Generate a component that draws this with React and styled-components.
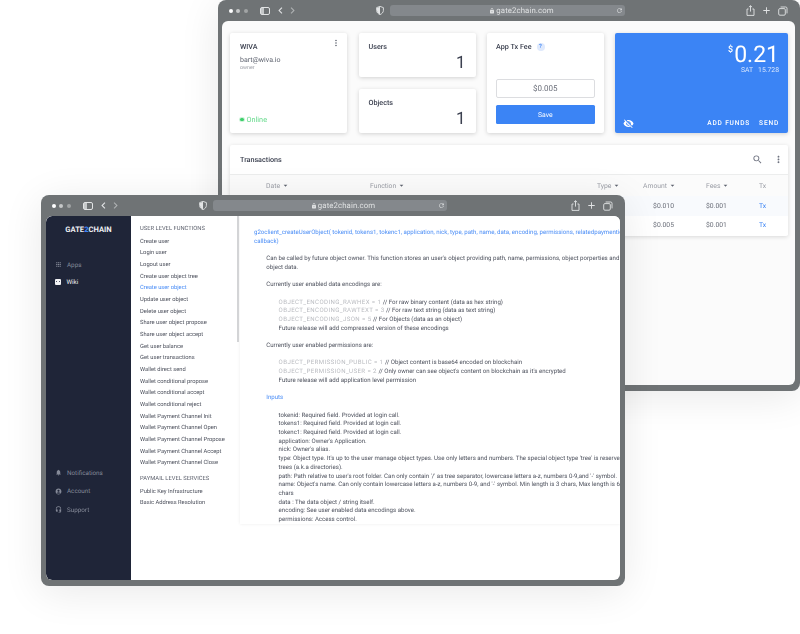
import React from "react";
import styled, { createGlobalStyle } from "styled-components";
import {
  MdApps,
  MdNotifications,
  MdAccountCircle,
  MdHeadsetMic,
  MdVisibilityOff,
  MdSearch,
  MdMoreVert,
  MdArrowDropDown,
  MdLock,
  MdRefresh,
  MdChevronLeft,
  MdChevronRight,
  MdAdd,
} from "react-icons/md";

const GlobalStyle = createGlobalStyle`
  html, body {
    margin: 0;
    padding: 0;
    background: #fff;
    overflow: hidden;
  }
  * { box-sizing: border-box; }
`;

const Stage = styled.div`
  position: relative;
  width: 800px;
  height: 634px;
  overflow: hidden;
  font-family: Roboto, "Liberation Sans", sans-serif;
  text-rendering: geometricPrecision;
  color: #3c4150;
  filter: blur(0.3px);
`;

// browser windows sit on a free canvas, so they are the only things placed by coordinates
const Win = styled.div`
  position: absolute;
  left: ${(p) => p.$x}px;
  top: ${(p) => p.$y}px;
  width: ${(p) => p.$w}px;
  height: 391px;
  display: flex;
  flex-direction: column;
  padding: 0 ${(p) => p.$right}px 6px ${(p) => p.$left}px;
  background: #6f7375;
  border-radius: 8px;
  box-shadow: 0 6px 40px rgba(0, 0, 0, 0.09);
`;

const Toolbar = styled.div`
  display: flex;
  align-items: center;
  flex: 0 0 21px;
  margin-left: ${(p) => 7 - p.$left}px;
  color: #e2e4e5;
`;

const Dots = styled.div`
  display: flex;
  gap: 3.4px;
  width: 31px;
  margin-left: 4px;
`;

const Dot = styled.span`
  width: 4px;
  height: 4px;
  border-radius: 50%;
  background: #fff;
  opacity: ${(p) => p.$o};
`;

const SidebarToggle = styled.span`
  display: flex;
  width: 9.5px;
  height: 8px;
  margin-right: 4px;
  border: 1px solid #e2e4e5;
  border-radius: 2px;
  &::before {
    content: "";
    width: 3px;
    background: #e2e4e5;
    opacity: 0.75;
  }
`;

const NavPair = styled.div`
  display: flex;
  align-items: center;
  width: 110px;
  font-size: 13px;
  svg:nth-child(2) {
    margin-left: -1px;
  }
`;

const Url = styled.div`
  position: relative;
  display: flex;
  align-items: center;
  justify-content: center;
  flex: 0 0 ${(p) => p.$w}px;
  height: 11px;
  margin-left: 6px;
  padding-left: ${(p) => p.$shift}px;
  gap: 1px;
  background: #84888c;
  border-radius: 3px;
  color: #dfe1e2;
  font-size: 7.8px;
  letter-spacing: 0.1px;
  svg:last-child {
    position: absolute;
    right: 2px;
  }
`;

const RightIcons = styled.div`
  display: flex;
  align-items: center;
  justify-content: flex-end;
  flex: 1;
  gap: 6px;
  padding-right: 7px;
`;

const Page = styled.div`
  flex: 1;
  display: flex;
  flex-direction: ${(p) => (p.$row ? "row" : "column")};
  min-height: 0;
  overflow: hidden;
  background: ${(p) => (p.$row ? "#fff" : "#fbfbfb")};
  border-radius: 6px;
`;

const Dash = styled.div`
  padding: 12px 7px 0 8px;
`;

const CardRow = styled.div`
  display: grid;
  grid-template-columns: 117px 117px 116.5px 173px;
  grid-template-rows: 100px;
  column-gap: 11.5px;
`;

const Card = styled.div`
  position: relative;
  display: flex;
  flex-direction: column;
  min-height: 0;
  padding: 9px 10px;
  background: #fff;
  border-radius: 2px;
  box-shadow: 0 1px 4px rgba(0, 0, 0, 0.17);
`;

const FeeCard = styled(Card)`
  padding: 9px 9px;
`;

const Stack = styled.div`
  display: flex;
  flex-direction: column;
  gap: 12px;
`;

const StatCard = styled(Card)`
  flex: 0 0 44px;
  padding-bottom: 0;
`;

const Title = styled.div`
  font-size: 7.2px;
  line-height: 9px;
  font-weight: 500;
  color: #3c4150;
`;

const Email = styled.div`
  margin-top: 5px;
  font-size: 7px;
  line-height: 8px;
  color: #5f6470;
`;

const Role = styled.div`
  margin-top: 1px;
  font-size: 5.3px;
  line-height: 6px;
  color: #9a9da5;
`;

const Online = styled.div`
  display: flex;
  align-items: center;
  gap: 3px;
  margin-top: auto;
  font-size: 7.3px;
  line-height: 9px;
  color: #63d98a;
`;

const OnlineDot = styled.span`
  width: 3.5px;
  height: 3.5px;
  border-radius: 50%;
  background: #3ecf6c;
  box-shadow: 0 0 0 1px rgba(62, 207, 108, 0.25);
`;

const Kebab = styled.span`
  position: absolute;
  top: 5px;
  right: 6px;
  display: flex;
  color: #5f6470;
  font-size: 10px;
`;

const Count = styled.div`
  margin-top: 3px;
  text-align: right;
  font-size: 17px;
  line-height: 19px;
  font-weight: 400;
  color: #3c4150;
`;

const FeeHead = styled.div`
  display: flex;
  align-items: center;
  gap: 5px;
`;

const Help = styled.span`
  display: flex;
  align-items: center;
  justify-content: center;
  width: 8px;
  height: 8px;
  border-radius: 50%;
  background: #dfe9fc;
  color: #3b84f5;
  font-size: 5.8px;
  font-weight: 500;
`;

const FeeInput = styled.div`
  display: flex;
  align-items: center;
  justify-content: center;
  height: 19px;
  margin-top: auto;
  border: 1px solid #dcdde0;
  border-radius: 2px;
  font-size: 8px;
  color: #6b6f7a;
`;

const SaveBtn = styled.div`
  display: flex;
  align-items: center;
  justify-content: center;
  height: 19px;
  margin-top: 7px;
  background: #3b84f5;
  border-radius: 1.5px;
  color: #fff;
  font-size: 6.8px;
  font-weight: 400;
`;

const Wallet = styled(Card)`
  background: #3b84f5;
  color: #fff;
  padding: 12px 9px 4px 8px;
`;

const Price = styled.div`
  display: flex;
  justify-content: flex-end;
  height: 20px;
  font-size: 23px;
  line-height: 20px;
  font-weight: 400;
  sup {
    font-size: 9px;
    line-height: 10px;
    font-weight: 500;
    margin-right: 1px;
    vertical-align: top;
  }
`;

const Sat = styled.div`
  display: flex;
  justify-content: flex-end;
  gap: 5px;
  margin-top: 1.5px;
  font-size: 6.8px;
  line-height: 7px;
  color: #dbe8fd;
`;

const WalletFoot = styled.div`
  display: flex;
  align-items: center;
  gap: 9px;
  margin-top: auto;
  font-size: 6.6px;
  line-height: 12px;
  font-weight: 500;
  letter-spacing: 0.8px;
  svg {
    margin-right: auto;
  }
`;

const Panel = styled.div`
  margin-top: 12px;
  height: 91px;
  background: #fff;
  border-radius: 2px;
  box-shadow: 0 1px 4px rgba(0, 0, 0, 0.14);
`;

const PanelHead = styled.div`
  display: flex;
  align-items: center;
  gap: 10px;
  height: 30px;
  padding: 0 4px 0 10px;
  border-bottom: 1px solid #eceded;
  color: #6f7380;
  font-size: 11px;
`;

const PanelTitle = styled(Title)`
  margin-right: auto;
`;

const TxGrid = styled.div`
  display: grid;
  grid-template-columns: 36px 104px 227px 46px 63px 53px 1fr;
  align-items: center;
  height: ${(p) => p.$h}px;
  background: ${(p) => p.$bg || "#fff"};
  font-size: 6.8px;
  color: ${(p) => p.$c || "#6a6e79"};
`;

const Th = styled.span`
  display: flex;
  align-items: center;
  gap: 1px;
  svg {
    color: #5f6470;
    font-size: 9px;
  }
`;

const AmountCell = styled.span`
  width: 31px;
  text-align: right;
`;

const TxLink = styled.span`
  color: #3b84f5;
`;

const Side = styled.nav`
  display: flex;
  flex-direction: column;
  flex: 0 0 85px;
  padding: 9px 0 0 9px;
  background: #1f2538;
  border-radius: 6px 0 0 6px;
  color: #9a9eaa;
`;

const Logo = styled.div`
  margin-left: -9px;
  text-align: center;
  font-size: 7.6px;
  line-height: 10px;
  font-weight: 700;
  color: #eef0f4;
  b {
    color: #3b84f5;
  }
`;

const NavGroup = styled.div`
  display: flex;
  flex-direction: column;
  gap: ${(p) => p.$gap}px;
  margin-top: ${(p) => p.$top}px;
`;

const NavItem = styled.div`
  display: flex;
  align-items: center;
  gap: 5.5px;
  height: 9px;
  font-size: 6.3px;
  color: ${(p) => (p.$on ? "#f2f3f6" : "#858a98")};
  svg {
    flex: 0 0 7px;
    margin-left: -0.5px;
  }
`;

const WikiGlyph = styled.span`
  display: flex;
  align-items: center;
  justify-content: center;
  gap: 1.2px;
  flex: 0 0 6px;
  height: 6px;
  background: #f2f3f6;
  border-radius: 1px;
  &::before,
  &::after {
    content: "";
    width: 1.4px;
    height: 1.4px;
    background: #1f2538;
    border-radius: 50%;
  }
`;

const Fns = styled.div`
  position: relative;
  flex: 0 0 109px;
  padding: 7.7px 0 0 9px;
  overflow: hidden;
  &::after {
    content: "";
    position: absolute;
    top: 0;
    left: 106px;
    width: 2px;
    height: 126px;
    background: #d3d4d6;
  }
`;

const FnHead = styled.div`
  height: 10px;
  margin: ${(p) => p.$top || 0}px 0 3px;
  font-size: 5.8px;
  line-height: 10px;
  color: #5b5f6b;
  white-space: nowrap;
`;

const Fn = styled.div`
  height: 11.67px;
  font-size: 5.75px;
  line-height: 11.67px;
  color: ${(p) => (p.$on ? "#4a8df6" : "#4c505c")};
  white-space: nowrap;
`;

const Doc = styled.div`
  flex: 1;
  align-self: flex-start;
  height: 308px;
  padding: 13px 0 0 14px;
  overflow: hidden;
  background: #fff;
  box-shadow: 0 0 3px rgba(0, 0, 0, 0.08);
  font-size: 6.1px;
  line-height: 8.7px;
  color: #4c505c;
`;

const DocBlock = styled.div`
  margin: 0 0 8.7px ${(p) => (p.$depth || 0) * 12.3}px;
  color: ${(p) => (p.$blue ? "#4a8df6" : "inherit")};
  white-space: nowrap;
`;

const Dim = styled.span`
  color: #b9bbc0;
  letter-spacing: 0.4px;
`;

const ShieldIcon = () => (
  <svg width="8" height="9" viewBox="0 0 8 9" style={{ marginLeft: "auto" }}>
    <path d="M4 .4 7.4 1.6V4.4C7.4 6.4 5.8 7.9 4 8.6 2.2 7.9.6 6.4.6 4.4V1.6Z" fill="none" stroke="currentColor" strokeWidth="0.9" />
    <path d="M4 .8V8.2C2.4 7.5 1 6.2 1 4.4V1.9Z" fill="currentColor" />
  </svg>
);

const ShareIcon = () => (
  <svg width="9" height="11" viewBox="0 0 9 11" fill="none" stroke="currentColor" strokeWidth="0.9">
    <path d="M2.6 4H1v6.4h7V4H6.4" />
    <path d="M4.5 6.6V.8M2.9 2.2 4.5.7l1.6 1.5" />
  </svg>
);

const TabsIcon = () => (
  <svg width="10" height="10" viewBox="0 0 10 10" fill="none" stroke="currentColor" strokeWidth="0.9">
    <rect x="0.7" y="2.6" width="6.6" height="6.6" rx="1.2" />
    <path d="M2.6 1h5.2c.7 0 1.2.5 1.2 1.2v5.2" />
  </svg>
);

const Browser = ({ x, y, w, left, right, urlW, urlShift, row, children }) => (
  <Win $x={x} $y={y} $w={w} $left={left} $right={right}>
    <Toolbar $left={left}>
      <Dots>
        <Dot $o={1} />
        <Dot $o={0.6} />
        <Dot $o={0.35} />
      </Dots>
      <SidebarToggle />
      <NavPair>
        <MdChevronLeft />
        <MdChevronRight style={{ opacity: 0.55 }} />
        <ShieldIcon />
      </NavPair>
      <Url $w={urlW} $shift={urlShift}>
        <MdLock size={6} />
        <span>gate2chain.com</span>
        <MdRefresh size={7} />
      </Url>
      <RightIcons>
        <ShareIcon />
        <MdAdd size={11} />
        <TabsIcon />
      </RightIcons>
    </Toolbar>
    <Page $row={row}>{children}</Page>
  </Win>
);

const functionsA = [
  "Create user",
  "Login user",
  "Logout user",
  "Create user object tree",
  "Create user object",
  "Update user object",
  "Delete user object",
  "Share user object propose",
  "Share user object accept",
  "Get user balance",
  "Get user transactions",
  "Wallet direct send",
  "Wallet conditional propose",
  "Wallet conditional accept",
  "Wallet conditional reject",
  "Wallet Payment Channel Init",
  "Wallet Payment Channel Open",
  "Wallet Payment Channel Propose",
  "Wallet Payment Channel Accept",
  "Wallet Payment Channel Close",
];

const inputs = [
  "tokenid: Required field. Provided at login call.",
  "tokens1: Required field. Provided at login call.",
  "tokenc1: Required field. Provided at login call.",
  "application: Owner's Application.",
  "nick: Owner's alias.",
  "type: Object type. It's up to the user manage object types. Use only letters and numbers. The special object type 'tree' is reserved for",
  "trees (a.k.a directories).",
  "path: Path relative to user's root folder. Can only contain '/' as tree separator, lowercase letters a-z, numbers 0-9,and '-' symbol.",
  "name: Object's name. Can only contain lowercase letters a-z, numbers 0-9, and '-' symbol. Min length is 3 chars, Max length is 64",
  "chars",
  "data : The data object / string itself.",
  "encoding: See user enabled data encodings above.",
  "permissions: Access control.",
];

const TxRow = ({ amount, bg }) => (
  <TxGrid $h={19.5} $bg={bg}>
    <span />
    <span />
    <span />
    <span />
    <AmountCell>{amount}</AmountCell>
    <span>$0.001</span>
    <TxLink>Tx</TxLink>
  </TxGrid>
);

const Sorted = ({ children }) => (
  <Th>
    {children}
    <MdArrowDropDown />
  </Th>
);

export default function App() {
  return (
    <Stage>
      <GlobalStyle />
      <Browser x={218} y={0} w={582} left={4} right={5} urlW={235} urlShift={29}>
        <Dash>
          <CardRow>
            <Card>
              <Title>WIVA</Title>
              <Email>bart@wiva.io</Email>
              <Role>owner</Role>
              <Kebab>
                <MdMoreVert />
              </Kebab>
              <Online>
                <OnlineDot />
                Online
              </Online>
            </Card>
            <Stack>
              <StatCard>
                <Title>Users</Title>
                <Count>1</Count>
              </StatCard>
              <StatCard>
                <Title>Objects</Title>
                <Count>1</Count>
              </StatCard>
            </Stack>
            <FeeCard>
              <FeeHead>
                <Title>App Tx Fee</Title>
                <Help>?</Help>
              </FeeHead>
              <FeeInput>$0.005</FeeInput>
              <SaveBtn>Save</SaveBtn>
            </FeeCard>
            <Wallet>
              <Price>
                <sup>$</sup>0.21
              </Price>
              <Sat>
                <span>SAT</span>
                <span>15.728</span>
              </Sat>
              <WalletFoot>
                <MdVisibilityOff size={11} />
                <span>ADD FUNDS</span>
                <span>SEND</span>
              </WalletFoot>
            </Wallet>
          </CardRow>
          <Panel>
            <PanelHead>
              <PanelTitle>Transactions</PanelTitle>
              <MdSearch size={11} />
              <MdMoreVert size={11} />
            </PanelHead>
            <TxGrid $h={21} $c="#9a9da5" $bg="#fbfbfb">
              <span />
              <Sorted>Date</Sorted>
              <Sorted>Function</Sorted>
              <Sorted>Type</Sorted>
              <Sorted>Amount</Sorted>
              <Sorted>Fees</Sorted>
              <span>Tx</span>
            </TxGrid>
            <TxRow amount="$0.010" bg="#f8fafd" />
            <TxRow amount="$0.005" />
          </Panel>
        </Dash>
      </Browser>
      <Browser x={41} y={195} w={584} left={5} right={5} urlW={234} urlShift={27} row>
        <Side>
          <Logo>
            GATE<b>2</b>CHAIN
          </Logo>
          <NavGroup $gap={8.3} $top={25}>
            <NavItem>
              <MdApps size={7} />
              Apps
            </NavItem>
            <NavItem $on>
              <WikiGlyph />
              Wiki
            </NavItem>
          </NavGroup>
          <NavGroup $gap={9.5} $top={182}>
            <NavItem>
              <MdNotifications size={7} />
              Notifications
            </NavItem>
            <NavItem>
              <MdAccountCircle size={7} />
              Account
            </NavItem>
            <NavItem>
              <MdHeadsetMic size={7} />
              Support
            </NavItem>
          </NavGroup>
        </Side>
        <Fns>
          <FnHead>USER LEVEL FUNCTIONS</FnHead>
          {functionsA.map((name) => (
            <Fn key={name} $on={name === "Create user object"}>
              {name}
            </Fn>
          ))}
          <FnHead $top={4}>PAYMAIL LEVEL SERVICES</FnHead>
          <Fn>Public Key Infrastructure</Fn>
          <Fn>Basic Address Resolution</Fn>
        </Fns>
        <Doc>
          <DocBlock $blue>
            g2oclient_createUserObject( tokenid, tokens1, tokenc1, application, nick, type, path, name, data, encoding, permissions, relatedpaymentid,
            <br />
            callback)
          </DocBlock>
          <DocBlock $depth={1}>
            Can be called by future object owner. This function stores an user's object providing path, name, permissions, object porperties and
            <br />
            object data.
          </DocBlock>
          <DocBlock $depth={1}>Currently user enabled data encodings are:</DocBlock>
          <DocBlock $depth={2}>
            <Dim>OBJECT_ENCODING_RAWHEX = 1</Dim> // For raw binary content (data as hex string)
            <br />
            <Dim>OBJECT_ENCODING_RAWTEXT = 3</Dim> // For raw text string (data as text string)
            <br />
            <Dim>OBJECT_ENCODING_JSON = 5</Dim> // For Objects (data as an object)
            <br />
            Future release will add compressed version of these encodings
          </DocBlock>
          <DocBlock $depth={1}>Currently user enabled permissions are:</DocBlock>
          <DocBlock $depth={2}>
            <Dim>OBJECT_PERMISSION_PUBLIC = 1</Dim> // Object content is base64 encoded on blockchain
            <br />
            <Dim>OBJECT_PERMISSION_USER = 2</Dim> // Only owner can see object's content on blockchain as it's encrypted
            <br />
            Future release will add application level permission
          </DocBlock>
          <DocBlock $depth={1} $blue>
            Inputs
          </DocBlock>
          <DocBlock $depth={2}>
            {inputs.map((line) => (
              <div key={line}>{line}</div>
            ))}
          </DocBlock>
        </Doc>
      </Browser>
    </Stage>
  );
}
